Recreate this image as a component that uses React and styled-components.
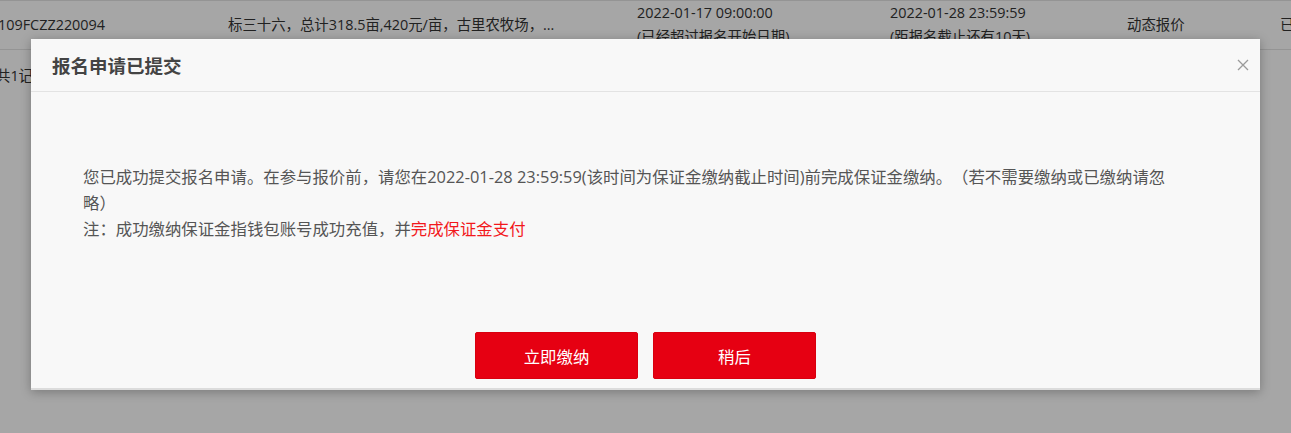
import React from "react";
import styled, { createGlobalStyle } from "styled-components";

const GlobalStyle = createGlobalStyle`
  html, body {
    margin: 0;
    padding: 0;
    background: #fff;
    font-family: "Open Sans", "Noto Sans CJK SC", sans-serif;
    color: #333;
    overflow: hidden;
    text-spacing-trim: space-all;
  }
`;

const Page = styled.div`
  width: 1291px;
  height: 433px;
  position: relative;
  overflow: hidden;
`;

const Row = styled.div`
  display: grid;
  grid-template-columns: 230px 409px 253px 237px 153px auto;
  margin-left: -2px;
  height: 48px;
  border-top: 1px solid #e4e4e4;
  border-bottom: 1px solid #e4e4e4;
  font-size: 14.4px;
  color: #333;
  white-space: nowrap;
`;

const Cell = styled.div`
  display: flex;
  flex-direction: column;
  justify-content: center;
  line-height: 24px;
  overflow: hidden;
`;

const Total = styled.div`
  margin: 14px 0 0 -4px;
  font-size: 14.4px;
  line-height: 24px;
  color: #333;
`;

const Backdrop = styled.div`
  position: absolute;
  inset: 0;
  background: rgba(0, 0, 0, 0.35);
`;

const Modal = styled.div`
  position: absolute;
  left: 31px;
  top: 39px;
  width: 1229px;
  height: 351px;
  box-sizing: border-box;
  display: flex;
  flex-direction: column;
  background: #f8f8f8;
  border-bottom: 2px solid #dcdcdc;
  box-shadow: 0 2px 10px rgba(0, 0, 0, 0.28);
`;

const Header = styled.div`
  height: 52px;
  flex: none;
  display: flex;
  align-items: center;
  justify-content: space-between;
  padding: 0 11px 0 21px;
  border-bottom: 1px solid #e3e3e3;
`;

const Title = styled.h3`
  margin: 0;
  font-size: 18.5px;
  font-weight: bold;
  color: #444;
`;

const Close = styled.button`
  width: 12px;
  height: 12px;
  padding: 0;
  border: none;
  background: none;
  cursor: pointer;
  display: flex;
`;

const Body = styled.div`
  flex: 1;
  padding: 72px 85px 0 52px;
  font-size: 16.4px;
  line-height: 26px;
  color: #555;
`;

const Para = styled.p`
  margin: 0;
`;

const Link = styled.a`
  color: #f2181c;
  text-decoration: none;
`;

const Footer = styled.div`
  display: flex;
  justify-content: center;
  gap: 15px;
  padding-bottom: 9px;
`;

const Button = styled.button`
  width: 163px;
  height: 47px;
  border: 1px solid #d8000f;
  border-radius: 2px;
  background: #e60012;
  color: #fff;
  font-family: inherit;
  font-size: 16.4px;
  cursor: pointer;
`;

const rowCells = [
  ["109FCZZ220094"],
  ["标三十六，总计318.5亩,420元/亩，古里农牧场，..."],
  ["2022-01-17 09:00:00", "(已经超过报名开始日期)"],
  ["2022-01-28 23:59:59", "(距报名截止还有10天)"],
  ["动态报价"],
  ["已报名"],
];

export default function App() {
  return (
    <>
      <GlobalStyle />
      <Page>
        <Row>
          {rowCells.map((lines, i) => (
            <Cell key={i}>
              {lines.map((t) => (
                <span key={t}>{t}</span>
              ))}
            </Cell>
          ))}
        </Row>
        <Total>共1记录</Total>

        <Backdrop />
        <Modal>
          <Header>
            <Title>报名申请已提交</Title>
            <Close aria-label="close">
              <svg width="12" height="12" viewBox="0 0 12 12">
                <path d="M1 1L11 11M11 1L1 11" stroke="#9a9a9a" strokeWidth="1.3" />
              </svg>
            </Close>
          </Header>
          <Body>
            <Para>
              您已成功提交报名申请。在参与报价前，请您在2022-01-28 23:59:59(该时间为保证金缴纳截止时间)前完成保证金缴纳。（若不需要缴纳或已缴纳请忽略）
            </Para>
            <Para>
              注：成功缴纳保证金指钱包账号成功充值，并<Link href="#">完成保证金支付</Link>
            </Para>
          </Body>
          <Footer>
            <Button>立即缴纳</Button>
            <Button>稍后</Button>
          </Footer>
        </Modal>
      </Page>
    </>
  );
}
